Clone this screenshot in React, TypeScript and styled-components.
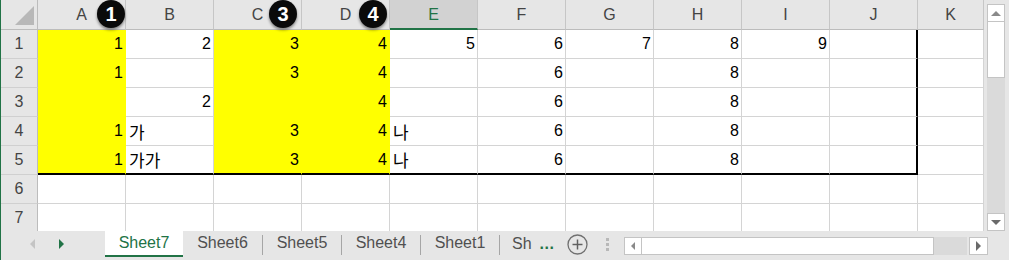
import { Fragment } from "react";
import styled, { createGlobalStyle } from "styled-components";

const GlobalStyle = createGlobalStyle`
  html, body {
    margin: 0;
    padding: 0;
    background: #ffffff;
  }
  body {
    font-family: "Liberation Sans", Arial, sans-serif;
  }
  * {
    box-sizing: border-box;
  }
`;

const GREEN = "#217346";

const COLS = ["A", "B", "C", "D", "E", "F", "G", "H", "I", "J", "K"];

type CellData = { v?: string; fill?: boolean; left?: boolean };

const y = (v?: string): CellData => ({ v, fill: true });
const n = (v?: string): CellData => ({ v });
const k = (v: string): CellData => ({ v, left: true });

const DATA: CellData[][] = [
  [y("1"), n("2"), y("3"), y("4"), n("5"), n("6"), n("7"), n("8"), n("9"), n(), n()],
  [y("1"), n(), y("3"), y("4"), n(), n("6"), n(), n("8"), n(), n(), n()],
  [y(), n("2"), y(), y("4"), n(), n("6"), n(), n("8"), n(), n(), n()],
  [y("1"), k("가"), y("3"), y("4"), k("나"), n("6"), n(), n("8"), n(), n(), n()],
  [y("1"), k("가가"), y("3"), y("4"), k("나"), n("6"), n(), n("8"), n(), n(), n()],
  [n(), n(), n(), n(), n(), n(), n(), n(), n(), n(), n()],
  [n(), n(), n(), n(), n(), n(), n(), n(), n(), n(), n()],
];

const BADGES: Record<string, { num: string; right: number }> = {
  A: { num: "1", right: 0 },
  C: { num: "3", right: 4 },
  D: { num: "4", right: 2 },
};

const Window = styled.div`
  width: 1009px;
  height: 260px;
  overflow: hidden;
  border-left: 1px solid ${GREEN};
  display: grid;
  grid-template-rows: 231px 29px;
  background: #e6e6e6;
`;

const SheetArea = styled.div`
  display: flex;
  overflow: hidden;
`;

const Grid = styled.div`
  display: grid;
  grid-template-columns: 37px repeat(10, 88px) 66px;
  grid-template-rows: 30px repeat(7, 29px);
  background: #ffffff;
  height: 231px;
  overflow: hidden;
`;

const Corner = styled.div`
  background: #e6e6e6;
  border-right: 1px solid #bcbcbc;
  border-bottom: 1px solid #bcbcbc;
  display: flex;
  align-items: flex-end;
  justify-content: flex-end;
  padding: 0 3px 4px 0;
`;

const ColHeader = styled.div<{ $selected?: boolean }>`
  position: relative;
  background: ${(p) => (p.$selected ? "#d2d2d2" : "#e6e6e6")};
  color: ${(p) => (p.$selected ? GREEN : "#444444")};
  border-right: 1px solid #c6c6c6;
  border-bottom: ${(p) => (p.$selected ? `2px solid ${GREEN}` : "1px solid #bcbcbc")};
  font-size: 16px;
  display: flex;
  align-items: center;
  justify-content: center;
  padding-top: ${(p) => (p.$selected ? "1px" : "0")};
`;

const Badge = styled.div<{ $right: number }>`
  position: absolute;
  top: 0;
  right: ${(p) => p.$right}px;
  width: 28px;
  height: 28px;
  border-radius: 50%;
  background: #0a0a0a;
  color: #ffffff;
  font-size: 20px;
  font-weight: 700;
  display: flex;
  align-items: center;
  justify-content: center;
  box-shadow: 0 2px 3px rgba(0, 0, 0, 0.45);
  z-index: 2;
`;

const RowHeader = styled.div`
  background: #e6e6e6;
  color: #444444;
  border-right: 1px solid #bcbcbc;
  border-bottom: 1px solid #d0d0d0;
  font-size: 16px;
  display: flex;
  align-items: center;
  justify-content: center;
`;

const Cell = styled.div<{
  $fill?: boolean;
  $left?: boolean;
  $thickRight?: boolean;
  $thickBottom?: boolean;
}>`
  background: ${(p) => (p.$fill ? "#ffff00" : "#ffffff")};
  border-right: ${(p) =>
    p.$thickRight ? "2px solid #000" : `1px solid ${p.$fill ? "#ffff00" : "#d4d4d4"}`};
  border-bottom: ${(p) =>
    p.$thickBottom ? "2px solid #000" : `1px solid ${p.$fill ? "#ffff00" : "#d4d4d4"}`};
  display: flex;
  align-items: center;
  justify-content: ${(p) => (p.$left ? "flex-start" : "flex-end")};
  padding: ${(p) => (p.$left ? "0 0 0 3px" : "0 2px 0 0")};
  font-size: ${(p) => (p.$left ? "17px" : "16px")};
  font-family: ${(p) =>
    p.$left
      ? `"Noto Sans CJK KR", "Liberation Sans", sans-serif`
      : `"Liberation Sans", Arial, sans-serif`};
  color: #000000;
  white-space: nowrap;
  overflow: hidden;
`;

const VScroll = styled.div`
  width: 25px;
  background: #e6e6e6;
  display: flex;
  flex-direction: column;
  padding: 4px 4px 0 3px;
`;

const ScrollButton = styled.div<{ $w?: number; $h?: number }>`
  width: ${(p) => p.$w ?? 18}px;
  height: ${(p) => p.$h ?? 18}px;
  flex: none;
  background: #ffffff;
  border: 1px solid #c4c4c4;
  display: flex;
  align-items: center;
  justify-content: center;
`;

const VThumb = styled.div`
  height: 56px;
  background: #ffffff;
  border: 1px solid #c4c4c4;
  border-top: none;
`;

const VTrack = styled.div`
  flex: 1;
  background: #dadada;
`;

const TabBar = styled.div`
  display: flex;
  align-items: flex-start;
  background: #e6e6e6;
  font-size: 16px;
  color: #505050;
`;

const NavArea = styled.div`
  width: 104px;
  height: 26px;
  display: flex;
  align-items: center;
  padding-left: 29px;
  gap: 24px;
`;

const Tab = styled.div<{ $active?: boolean; $w: number }>`
  width: ${(p) => p.$w}px;
  height: 26px;
  flex: none;
  display: flex;
  align-items: center;
  justify-content: center;
  background: ${(p) => (p.$active ? "#ffffff" : "transparent")};
  color: ${(p) => (p.$active ? GREEN : "#505050")};
  border-bottom: 2px solid ${(p) => (p.$active ? GREEN : "transparent")};
  padding-bottom: 1px;
`;

const Separator = styled.div`
  width: 1px;
  height: 20px;
  margin-top: 4px;
  background: #a6a6a6;
  flex: none;
`;

const ShTab = styled.div`
  height: 26px;
  display: flex;
  align-items: center;
  padding-left: 12px;
  padding-bottom: 1px;
`;

const More = styled.span`
  color: ${GREEN};
  margin-left: 8px;
  font-weight: 700;
  letter-spacing: 0.5px;
`;

const AddButton = styled.div`
  margin-left: 13px;
  height: 26px;
  display: flex;
  align-items: center;
`;

const Dots = styled.div`
  margin-left: 18px;
  height: 26px;
  display: flex;
  flex-direction: column;
  justify-content: center;
  gap: 2px;
  span {
    display: block;
    width: 3px;
    height: 3px;
    background: #b8b8b8;
  }
`;

const HScroll = styled.div`
  margin-left: 15px;
  margin-top: 6px;
  width: 364px;
  height: 18px;
  display: flex;
`;

const HThumb = styled.div`
  width: 292px;
  background: #ffffff;
  border: 1px solid #c4c4c4;
  border-left: none;
`;

const HTrack = styled.div`
  flex: 1;
  background: #dadada;
  margin-right: 2px;
`;

const Tri = ({
  dir,
  color,
  size = 5,
}: {
  dir: "up" | "down" | "left" | "right";
  color: string;
  size?: number;
}) => {
  const s = size;
  const pts = {
    up: `0,${s} ${s},0 ${2 * s},${s}`,
    down: `0,0 ${2 * s},0 ${s},${s}`,
    left: `${s},0 ${s},${2 * s} 0,${s}`,
    right: `0,0 0,${2 * s} ${s},${s}`,
  }[dir];
  const w = dir === "up" || dir === "down" ? 2 * s : s;
  const h = dir === "up" || dir === "down" ? s : 2 * s;
  return (
    <svg width={w} height={h} viewBox={`0 0 ${w} ${h}`}>
      <polygon points={pts} fill={color} />
    </svg>
  );
};

const SHEETS = ["Sheet6", "Sheet5", "Sheet4", "Sheet1"];

export default function App() {
  return (
    <>
      <GlobalStyle />
      <Window>
        <SheetArea>
          <Grid>
            <Corner>
              <svg width="19" height="19" viewBox="0 0 19 19">
                <polygon points="19,0 19,19 0,19" fill="#b8b8b8" />
              </svg>
            </Corner>
            {COLS.map((c) => (
              <ColHeader key={c} $selected={c === "E"}>
                {c}
                {BADGES[c] && <Badge $right={BADGES[c].right}>{BADGES[c].num}</Badge>}
              </ColHeader>
            ))}
            {DATA.map((row, r) => (
              <Fragment key={r}>
                <RowHeader>{r + 1}</RowHeader>
                {row.map((cell, c) => (
                  <Cell
                    key={c}
                    $fill={cell.fill}
                    $left={cell.left}
                    $thickRight={c === 9 && r < 5}
                    $thickBottom={r === 4 && c < 10}
                  >
                    {cell.v}
                  </Cell>
                ))}
              </Fragment>
            ))}
          </Grid>
          <VScroll>
            <ScrollButton>
              <Tri dir="up" color="#8a8a8a" size={5} />
            </ScrollButton>
            <VThumb />
            <VTrack />
            <ScrollButton>
              <Tri dir="down" color="#6a6a6a" size={5} />
            </ScrollButton>
          </VScroll>
        </SheetArea>
        <TabBar>
          <NavArea>
            <Tri dir="left" color="#c4c4c4" size={5} />
            <Tri dir="right" color={GREEN} size={5} />
          </NavArea>
          <Tab $active $w={78}>
            Sheet7
          </Tab>
          {SHEETS.map((s, i) => (
            <Fragment key={s}>
              <Tab $w={i === 0 ? 79 : 78}>{s}</Tab>
              <Separator />
            </Fragment>
          ))}
          <ShTab>
            Sh<More>...</More>
          </ShTab>
          <AddButton>
            <svg width="21" height="21" viewBox="0 0 21 21">
              <circle cx="10.5" cy="10.5" r="9.5" fill="none" stroke="#707070" strokeWidth="1.3" />
              <line x1="10.5" y1="5.5" x2="10.5" y2="15.5" stroke="#606060" strokeWidth="1.5" />
              <line x1="5.5" y1="10.5" x2="15.5" y2="10.5" stroke="#606060" strokeWidth="1.5" />
            </svg>
          </AddButton>
          <Dots>
            <span />
            <span />
            <span />
          </Dots>
          <HScroll>
            <ScrollButton>
              <Tri dir="left" color="#8a8a8a" size={4} />
            </ScrollButton>
            <HThumb />
            <HTrack />
            <ScrollButton $w={19}>
              <Tri dir="right" color="#6a6a6a" size={5} />
            </ScrollButton>
          </HScroll>
        </TabBar>
      </Window>
    </>
  );
}
